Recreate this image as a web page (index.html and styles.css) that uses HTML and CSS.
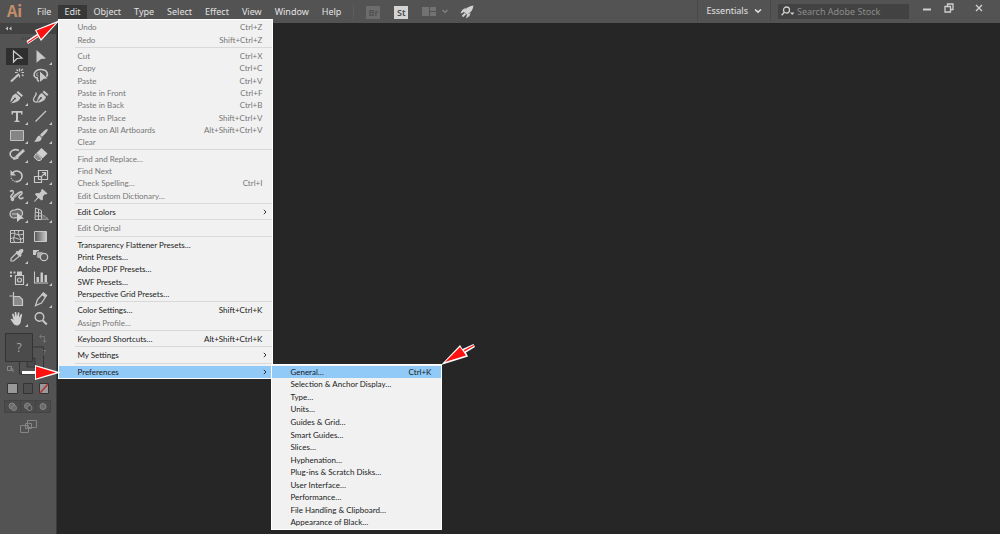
FILE: index.html
```html
<!DOCTYPE html>
<html lang="en">
<head>
<meta charset="utf-8">
<title>Adobe Illustrator</title>
<link rel="stylesheet" href="styles.css">
</head>
<body>
<header class="bar">
  <span class="logo">Ai</span>
  <nav class="menus">
    <button class="top">File</button>
    <div class="holder">
      <button class="top open">Edit</button>
      <ul class="menu edit-menu">
        <li class="item off"><span>Undo</span><kbd>Ctrl+Z</kbd></li>
        <li class="item off"><span>Redo</span><kbd>Shift+Ctrl+Z</kbd></li>
        <li class="sep"></li>
        <li class="item off"><span>Cut</span><kbd>Ctrl+X</kbd></li>
        <li class="item off"><span>Copy</span><kbd>Ctrl+C</kbd></li>
        <li class="item off"><span>Paste</span><kbd>Ctrl+V</kbd></li>
        <li class="item off"><span>Paste in Front</span><kbd>Ctrl+F</kbd></li>
        <li class="item off"><span>Paste in Back</span><kbd>Ctrl+B</kbd></li>
        <li class="item off"><span>Paste in Place</span><kbd>Shift+Ctrl+V</kbd></li>
        <li class="item off"><span>Paste on All Artboards</span><kbd>Alt+Shift+Ctrl+V</kbd></li>
        <li class="item off"><span>Clear</span></li>
        <li class="sep"></li>
        <li class="item off"><span>Find and Replace…</span></li>
        <li class="item off"><span>Find Next</span></li>
        <li class="item off"><span>Check Spelling…</span><kbd>Ctrl+I</kbd></li>
        <li class="item off"><span>Edit Custom Dictionary…</span></li>
        <li class="sep"></li>
        <li class="item parent"><span>Edit Colors</span><svg class="chev" viewBox="0 0 4 6"><path d="M.8.8 3 3 .8 5.200"/></svg></li>
        <li class="sep"></li>
        <li class="item off"><span>Edit Original</span></li>
        <li class="sep"></li>
        <li class="item"><span>Transparency Flattener Presets…</span></li>
        <li class="item"><span>Print Presets…</span></li>
        <li class="item"><span>Adobe PDF Presets…</span></li>
        <li class="item"><span>SWF Presets…</span></li>
        <li class="item"><span>Perspective Grid Presets…</span></li>
        <li class="sep"></li>
        <li class="item"><span>Color Settings…</span><kbd>Shift+Ctrl+K</kbd></li>
        <li class="item off"><span>Assign Profile…</span></li>
        <li class="sep"></li>
        <li class="item"><span>Keyboard Shortcuts…</span><kbd>Alt+Shift+Ctrl+K</kbd></li>
        <li class="sep"></li>
        <li class="item parent"><span>My Settings</span><svg class="chev" viewBox="0 0 4 6"><path d="M.8.8 3 3 .8 5.200"/></svg></li>
        <li class="sep"></li>
        <li class="item parent hot"><span>Preferences</span><svg class="chev" viewBox="0 0 4 6"><path d="M.8.8 3 3 .8 5.200"/></svg>
          <ul class="menu sub-menu">
            <li class="item hot"><span>General…</span><kbd>Ctrl+K</kbd></li>
            <li class="item"><span>Selection &amp; Anchor Display…</span></li>
            <li class="item"><span>Type…</span></li>
            <li class="item"><span>Units…</span></li>
            <li class="item"><span>Guides &amp; Grid…</span></li>
            <li class="item"><span>Smart Guides…</span></li>
            <li class="item"><span>Slices…</span></li>
            <li class="item"><span>Hyphenation…</span></li>
            <li class="item"><span>Plug-ins &amp; Scratch Disks…</span></li>
            <li class="item"><span>User Interface…</span></li>
            <li class="item"><span>Performance…</span></li>
            <li class="item"><span>File Handling &amp; Clipboard…</span></li>
            <li class="item"><span>Appearance of Black…</span></li>
          </ul>
        </li>
      </ul>
    </div>
    <button class="top">Object</button>
    <button class="top">Type</button>
    <button class="top">Select</button>
    <button class="top">Effect</button>
    <button class="top">View</button>
    <button class="top">Window</button>
    <button class="top">Help</button>
  </nav>
  <div class="apps">
    <button class="chip dim">Br</button>
    <button class="chip">St</button>
    <button class="plain" aria-label="Arrange documents"><svg width="28" height="12" viewBox="0 0 28 12"><path fill="#727272" d="M0 1h7v9H0zM8 1h6v4H8zM8 6h6v4H8z"/><path fill="none" stroke="#858585" stroke-width="1.200" d="m20.500 4 2.500 2.500L25.500 4"/></svg></button>
    <button class="plain" aria-label="GPU performance"><svg width="14" height="14" viewBox="0 0 14 14"><path fill="#d2d2d2" d="M13.500.5C9 1 5.500 3 3.500 6.500l3.500 3c3.500-1.500 6-4.500 6.500-9zM6 2.500 2.200 5 .3 8.500l3-1zM10.500 8 9.500 11l-3.500 2.500 1-4z"/><path stroke="#d2d2d2" stroke-width="2" d="m5.500 8.500-3 3"/></svg></button>
  </div>
  <div class="right">
    <button class="workspace">Essentials<svg width="8" height="6" viewBox="0 0 8 6"><path fill="none" stroke="#e0e0e0" stroke-width="1.600" d="M1 1.500 4 4.200 7 1.500"/></svg></button>
    <label class="search">
      <svg width="14" height="11" viewBox="0 0 14 11"><g fill="none" stroke="#d0d0d0" stroke-width="1.300"><circle cx="5.500" cy="4" r="3"/><path d="M3.400 6.300.6 9.200"/></g><path fill="#d0d0d0" d="M9 6.500h4.500L11.200 9z"/></svg>
      <input type="text" placeholder="Search Adobe Stock" aria-label="Search Adobe Stock">
    </label>
    <div class="window">
      <button class="plain" aria-label="Minimize"><svg width="10" height="10" viewBox="0 0 10 10"><path stroke="#cfcfcf" stroke-width="2" d="M1 6.500h8"/></svg></button>
      <button class="plain" aria-label="Restore"><svg width="10" height="10" viewBox="0 0 10 10"><g fill="none" stroke="#cfcfcf" stroke-width="1.300"><path d="M1 3.500h5.500V9H1zM3.500 3.500V1H9v5.500H6.500"/></g></svg></button>
      <button class="plain close" aria-label="Close"><svg width="10" height="10" viewBox="0 0 10 10"><path stroke="#cfcfcf" stroke-width="1.400" d="m2 2 6 6M8 2 2 8"/></svg></button>
    </div>
  </div>
</header>
<main class="work">
  <aside class="tools">
    <div class="collapse"><svg width="7" height="5" viewBox="0 0 7 5"><path fill="#c5c5c5" d="M3 .5v4L.5 2.500zM6.500.5v4L4 2.500z"/></svg></div>
    <div class="grip"></div>
    <div class="set">
      <button class="tool on" aria-label="Selection"><svg viewBox="0 0 22 17"><path fill="none" stroke="#d0d0d0" stroke-width="1.200" d="m7.500 3 8.500 7-5 .5-3.500 3.500z"/></svg></button>
      <button class="tool more" aria-label="Direct selection"><svg viewBox="0 0 22 17"><path fill="#c8c8c8" d="m6.500 2 9.500 8.500-5 .5-4.500 3.800z"/></svg></button>
      <button class="tool" aria-label="Magic wand"><svg viewBox="0 0 22 17"><path stroke="#c8c8c8" stroke-width="2" d="m5 14.500 8-7.500"/><path stroke="#c8c8c8" stroke-width="1.200" d="M13.500 1.500v3M13.500 8v2.500M9 5.500h2.500M15.500 5.500H18M10.500 2.500l1.500 1.500M16.800 2l-1.800 1.800M16 7.500l1.500 1.500"/></svg></button>
      <button class="tool" aria-label="Lasso"><svg viewBox="0 0 22 17"><path fill="none" stroke="#c8c8c8" stroke-width="1.600" d="M8 11C4 11 3.500 8 4.500 6 6 3 9.500 2 13 2.700c4 .8 5.500 4 3.500 7M8 11c-1.500 1-.5 2.500 1 3.500"/><path fill="none" stroke="#c8c8c8" d="M8 5.500C5.500 7.500 7 9.500 8.500 9"/><path fill="#c8c8c8" d="m10 4.500 7.500 7-3.500.3-4 3z"/></svg></button>
    </div>
    <div class="set">
      <button class="tool more" aria-label="Pen"><svg viewBox="0 0 22 17"><path fill="#c8c8c8" d="m12 2 5 4.500-1.500 1.500-5-4.500zM10 4.500l4.500 4C13.500 12 10 13.500 5 14.500l4-4a1 1 0 1 0-1-1l-3.600 4C5 9 6.500 5.500 10 4.500z"/></svg></button>
      <button class="tool" aria-label="Curvature"><svg viewBox="0 0 22 17"><path fill="none" stroke="#c8c8c8" stroke-width="1.300" d="M5.500 3.500C8 5 3 8 3.500 11c.5 2 3 3 4 1"/><path fill="#c8c8c8" d="m14 1.500 4.500 4L17 7l-4.500-4zM12 4l4 4c-1 3.500-4 5-9 6l4-4a1 1 0 1 0-1-1l-3 4C7.500 9 9 5 12 4z"/></svg></button>
      <button class="tool more" aria-label="Type"><svg viewBox="0 0 22 17"><path fill="#c8c8c8" d="M5.500 3h11v3.500h-1.200L14.800 4.700H12v7.800l1.500.5v1h-5v-1l1.500-.5V4.700H7.200L6.700 6.500H5.500z"/></svg></button>
      <button class="tool more" aria-label="Line"><svg viewBox="0 0 22 17"><path stroke="#c8c8c8" stroke-width="1.300" d="M5.500 13.500 16 3"/></svg></button>
      <button class="tool more" aria-label="Rectangle"><svg viewBox="0 0 22 17"><path fill="#858585" stroke="#c0c0c0" d="M4.500 3.500h13v10h-13z"/></svg></button>
      <button class="tool more" aria-label="Paintbrush"><svg viewBox="0 0 22 17"><path fill="#c8c8c8" d="M17.500 2c1.200.8-2 5-5.500 8L10 8c3-3.500 6.500-6.500 7.500-6zM9.500 8.500l2.200 2.200c0 3.300-3.200 4.800-7.700 3.800 2.500-1 2-5 5.500-6z"/></svg></button>
      <button class="tool more" aria-label="Shaper"><svg viewBox="0 0 22 17"><path fill="none" stroke="#c8c8c8" stroke-width="1.600" d="M13 4.500C8 2 3 5.500 4.500 9.500c1.500 3 5.500 4 8 2"/><path stroke="#c8c8c8" stroke-width="3" d="m10 11.500 8-7.500"/><path fill="#c8c8c8" d="m8.500 10.500 2.500 2.500-4 1z"/></svg></button>
      <button class="tool more" aria-label="Eraser"><svg viewBox="0 0 22 17"><path fill="#d0d0d0" d="m11.500 2 6 5.500-5 5-6-5.500z"/><path fill="#8c8c8c" stroke="#c8c8c8" d="m6 7.500 6 5.500-2 1.500H7.500L4 11z"/></svg></button>
    </div>
    <div class="set">
      <button class="tool more" aria-label="Rotate"><svg viewBox="0 0 22 17"><path fill="none" stroke="#c8c8c8" stroke-width="1.600" d="M6.500 5c3-3.500 9-2 9.500 2.500.5 4-3 6.500-6 6"/><path fill="none" stroke="#c8c8c8" stroke-width="1.500" stroke-dasharray="1 1.300" d="M9.500 13.500C7 13 5 11 5 8.500"/><path fill="#c8c8c8" d="M4.500 2v5.500H10z"/></svg></button>
      <button class="tool more" aria-label="Scale"><svg viewBox="0 0 22 17"><g fill="none" stroke="#c8c8c8" stroke-width="1.200"><path d="M8.500 2.500h9v9h-9zM4.500 8.500h7v6h-7zM10.500 9.500 15 5M12 4.500h3.500V8"/></g></svg></button>
      <button class="tool more" aria-label="Width"><svg viewBox="0 0 22 17"><path fill="none" stroke="#c8c8c8" stroke-width="1.600" d="M4 4.500c3-2 4 0 3 2s-3 2-2 4 3-2 5-3 5-4 6-2-4 3-3 5 3 1 4.500 0"/><path stroke="#c8c8c8" d="m6 13 10-9"/><circle cx="6.500" cy="12.500" r="1.700" fill="#c8c8c8"/></svg></button>
      <button class="tool more" aria-label="Puppet warp"><svg viewBox="0 0 22 17"><path fill="#c8c8c8" d="m12.500 2 5 4.500-1.500 1-1.200-.2-2 2.200.2 3-1.500 1-3-2.500-4 4L4 14.500l3.500-4.500L5 7.500 6 6l3 .2 2.300-2L11 3z"/></svg></button>
      <button class="tool more" aria-label="Shape builder"><svg viewBox="0 0 22 17"><g fill="#6d6d6d" stroke="#c8c8c8" stroke-width="1.200"><circle cx="8" cy="8" r="4"/><path d="M9 4c4-2.500 8 .5 7.500 4S12 12.500 9 11.500"/></g><path stroke="#c8c8c8" d="M6 8h6"/><path fill="#d0d0d0" d="m11 6.500 7 6-3.500.5-3.500 3z"/></svg></button>
      <button class="tool more" aria-label="Perspective grid"><svg viewBox="0 0 22 17"><g fill="none" stroke="#c8c8c8"><path d="m5.500 2 6 2.500v9H5zM8.500 3.200v10.300M5.500 6l6 1.500M5.500 10h6"/></g><path fill="none" stroke="#929292" d="m11.500 8 7 5.500h-7M12 10h3.500M12 12h6"/></svg></button>
    </div>
    <div class="set">
      <button class="tool" aria-label="Mesh"><svg viewBox="0 0 22 17"><g fill="none" stroke="#c8c8c8"><path d="M4.500 2.500h13v12h-13zM4.500 6c4-3 5 3 13 0M4.500 11c5-4 8 3 13-1M8 2.500c3 4-3 7 1 12M13 2.500c-3 5 4 7 1 12"/></g></svg></button>
      <button class="tool" aria-label="Gradient"><svg viewBox="0 0 22 17"><defs><linearGradient id="g"><stop stop-color="#555"/><stop offset="1" stop-color="#ccc"/></linearGradient></defs><path fill="url(#g)" stroke="#c8c8c8" d="M4.500 3.500h12v10h-12z"/></svg></button>
      <button class="tool more" aria-label="Eyedropper"><svg viewBox="0 0 22 17"><path fill="none" stroke="#c8c8c8" stroke-width="1.200" d="m10.500 6 3 3-6 5H5v-2.500z"/><path fill="#c8c8c8" d="m9.500 5 1.500-1.200 1 .7c2-2.500 4-3 5-2s0 3-2 4.800l.7 1L14.500 10z"/></svg></button>
      <button class="tool" aria-label="Blend"><svg viewBox="0 0 22 17"><path fill="#c8c8c8" d="M3 3h6v5H3z"/><rect x="6.500" y="4.500" width="7" height="7" rx="2" fill="#aaa" stroke="#555"/><circle cx="14" cy="10" r="3.700" fill="#5a5a5a" stroke="#c8c8c8" stroke-width="1.200"/></svg></button>
    </div>
    <div class="set">
      <button class="tool more" aria-label="Symbol sprayer"><svg viewBox="0 0 22 17"><g fill="none" stroke="#c8c8c8" stroke-width="1.200"><path d="M9.500 6.500h8v9h-8z"/><circle cx="13.500" cy="11" r="2"/></g><path fill="#c8c8c8" d="M11 2.500h5V6h-5zM4 2.500h2v2H4zM7.500 2.500h2v2h-2zM4 6h2v2H4z"/></svg></button>
      <button class="tool more" aria-label="Column graph"><svg viewBox="0 0 22 17"><path fill="#c8c8c8" d="M4 2.500h1v11h13v1H4zM6.500 8H9v5H6.500zM10.500 3.500H13V13h-2.500zM14.500 6H17v7h-2.500z"/></svg></button>
    </div>
    <div class="set">
      <button class="tool" aria-label="Artboard"><svg viewBox="0 0 22 17"><path fill="none" stroke="#c8c8c8" stroke-width="1.200" d="M7.500 1v13.500M3.500 5h3"/><path fill="#8a8a8a" stroke="#c8c8c8" stroke-width="1.200" d="M7.500 5.500h6l3 3v6h-9z"/></svg></button>
      <button class="tool more" aria-label="Slice"><svg viewBox="0 0 22 17"><path fill="none" stroke="#c8c8c8" stroke-width="1.300" d="m13.500 2 3 2.500-5 7.500-6 2.500 2-6z"/><path fill="#c8c8c8" d="m13 1.500 4 3-2 2-4-3z"/></svg></button>
      <button class="tool more" aria-label="Hand"><svg viewBox="0 0 22 17"><path fill="#d0d0d0" d="m7 8-1-4 1.300-.4L9 7l-.3-5h1.500l.8 4.600L12 2.200l1.400.2-.4 5 2-3.600 1.200.6L15 10c0 3-1.500 5.500-4 5.500-3 0-4-3-6.500-6L6 8.500l1.500 1.700z"/></svg></button>
      <button class="tool" aria-label="Zoom"><svg viewBox="0 0 22 17"><g fill="none" stroke="#c8c8c8"><circle cx="9.500" cy="7" r="4.300" stroke-width="1.400"/><path stroke-width="2" d="m12.800 10.500 4 4"/></g></svg></button>
    </div>
    <svg class="paint" viewBox="0 4 56 110">
      <g fill="none" stroke="#343434"><path d="M19.500 34v12h24V19H32"/><path fill="#4b4b4b" d="M27 34v5h8v-9h-4"/><path d="M5.500 5.500h27v28h-27z" fill="#4b4b4b"/></g>
      <path fill="none" stroke="#777" d="M40 8.500h4.500V14M41.500 6.500 39.500 8.500l2 2M43 12.500l1.500 2 1.500-2"/>
      <path fill="none" stroke="#888" d="M7.500 38.500h4v4h-4zM10 41h3v3"/>
      <text class="mark" x="19" y="24">?</text><text class="small-mark" x="44" y="27">?</text>
      <g stroke="#343434"><path fill="#999" d="M7.500 55.500h10v10h-10z"/><path fill="#4e4e4e" d="M23.500 55.500h9v10h-9z"/><path fill="#999" d="M39.500 55.500h9v10h-9z"/></g>
      <path stroke="#b33" stroke-width="1.600" d="m40 65 8-9"/>
      <path fill="#4b4b4b" stroke="#444" d="M4.500 72.500h46v12h-46zM20.500 73v11M35.500 73v11"/>
      <g fill="#6b6b6b" stroke="#858585"><circle cx="12" cy="78" r="3"/><circle cx="14" cy="80" r="2.500"/><circle cx="27.500" cy="78" r="3"/><circle cx="29.500" cy="80" r="2.500" fill="#4b4b4b"/><circle cx="43" cy="78.500" r="3"/></g>
      <g fill="#535353" stroke="#858585"><path d="M27.500 92.500h9v7h-9zM20.500 97.500h8v7h-8zM25.500 95.500h6v5h-6z"/></g>
    </svg>
  </aside>
</main>
<svg class="arrow first" viewBox="0 0 36 28"><path fill="#fff" d="m.5 22 1.500 3 10.500-7 2.500 4L34 1 9 11l2 4z"/><path fill="#f11" d="M30 4 10.500 11.500 15 20zM1.500 23l10-6.500.5 1L2 24z"/></svg>
<svg class="arrow second" viewBox="0 0 40 15"><path fill="#fff" d="M0 6h13V0l26 7.500L13 15V9H0z"/><path fill="#f11" d="m14 1.500 20 6-20 6z"/></svg>
<svg class="arrow third" viewBox="0 0 36 26"><path fill="#fff" d="m33.500 2 1.500 3-9 5.500 2 4L1 23 20 3l2.500 4z"/><path fill="#f11" d="M5 20 20 5l6 8.500zM24 8l9.500-5 .5 1-9.500 5.500z"/></svg>
</body>
</html>
```
FILE: styles.css
```css
* { box-sizing: border-box; }
body {
  margin: 0;
  min-height: 100vh;
  display: flex;
  flex-direction: column;
  background: #262626;
  color: #e2e2e2;
  font: 9px/14px "Noto Sans", "Open Sans", sans-serif;
}
button {
  margin: 0;
  padding: 0;
  border: 0;
  background: none;
  color: inherit;
  font: inherit;
}
svg { display: block; }
ul { margin: 0; padding: 0; list-style: none; }
kbd { font: inherit; }

.bar {
  display: flex;
  align-items: flex-start;
  height: 23px;
  background: #535353;
}
.logo {
  width: 31px;
  padding-left: 7px;
  color: #c58e6b;
  font: 700 16px/20px "Noto Sans CJK SC", "Open Sans", sans-serif;
}
.menus { display: flex; gap: 1px; padding-top: 5px; }
.holder { position: relative; }
.top { display: block; padding: 0 6px; }
.top.open { background: #383838; }

.menu {
  position: absolute;
  z-index: 2;
  display: flex;
  flex-direction: column;
  padding-top: 1px;
  border: 1px solid #fff;
  background: #f1f1f1;
  color: #1b1b1b;
  font-family: Lato, "Open Sans", sans-serif;
  font-size: 8px;
  line-height: 12px;
  white-space: nowrap;
}
.edit-menu { top: 14px; left: 0; width: 215px; height: 360px; }
.sub-menu { top: -2px; left: 212px; width: 171px; height: 166px; }
.item {
  position: relative;
  flex: 1;
  display: flex;
  align-items: center;
  justify-content: space-between;
  padding: 0 10px 0 18px;
}
.item.parent { padding-right: 5px; }
.item.off { color: #777; }
.item.hot { background: #91c9f7; }
.sep { height: 4px; margin-left: 16px; padding: 1px 0; }
.sep::before { content: ""; display: block; height: 1px; background: #d9d9d9; }
.chev { width: 4px; height: 6px; fill: none; stroke: #333; }

.apps {
  display: flex;
  align-items: center;
  gap: 14px;
  height: 14px;
  margin: 5px 0 0 6px;
  padding-left: 12px;
  border-left: 1px solid #5e5e5e;
}
.chip {
  width: 14px;
  height: 13px;
  background: #d4d4d4;
  color: #484848;
  font-weight: 600;
  line-height: 13px;
}
.chip.dim { background: #6c6c6c; color: #505050; }
.apps .plain + .plain { margin-left: -4px; }
.right { display: flex; align-items: flex-start; margin-left: auto; }
.workspace {
  display: flex;
  align-items: center;
  gap: 6px;
  height: 21px;
  padding: 0 8px;
  border: 0 solid #484848;
  border-width: 0 1px;
}
.search {
  display: flex;
  align-items: center;
  gap: 2px;
  width: 131px;
  height: 15px;
  margin: 4px 0 0 7px;
  padding-left: 3px;
  background: #424242;
}
.search input {
  flex: 1;
  min-width: 0;
  padding: 0;
  border: 0;
  background: none;
  color: #ddd;
  font: inherit;
}
.search input::placeholder { color: #8c8c8c; opacity: 1; }
.window { display: flex; gap: 12px; padding: 3px 16px 0 13px; }
.close { padding-left: 8px; }

.work { flex: 1; display: flex; }
.tools {
  width: 57px;
  background: #535353;
  border-right: 1px solid #3a3a3a;
}
.collapse { height: 11px; padding: 3px 5px; background: #424242; }
.grip { width: 14px; height: 3px; margin: 3px auto 8px; background: repeating-linear-gradient(90deg, #464646 0 1px, #535353 1px 2px); }
.set {
  display: grid;
  grid-template-columns: 22px 22px;
  column-gap: 2px;
  row-gap: 2px;
  margin: 0 5px 5px 6px;
}
.tool { position: relative; height: 17px; }
.tool svg { width: 22px; height: 17px; }
.tool.on { background: #2f2f2f; }
.tool.more::after {
  content: "";
  position: absolute;
  right: 0;
  bottom: 0;
  border: solid transparent;
  border-width: 0 0 3px 3px;
  border-bottom-color: #c8c8c8;
}
.paint { width: 56px; height: 110px; font-family: "Open Sans", sans-serif; text-anchor: middle; }
.mark { fill: #a5a5a5; font-size: 12px; }
.small-mark { fill: #8a8a8a; font-size: 8px; }

.arrow { position: absolute; z-index: 3; }
.first { left: 26px; top: 19px; width: 36px; height: 28px; }
.second { left: 22px; top: 365px; width: 40px; height: 15px; }
.third { left: 440px; top: 342px; width: 36px; height: 26px; }
```
